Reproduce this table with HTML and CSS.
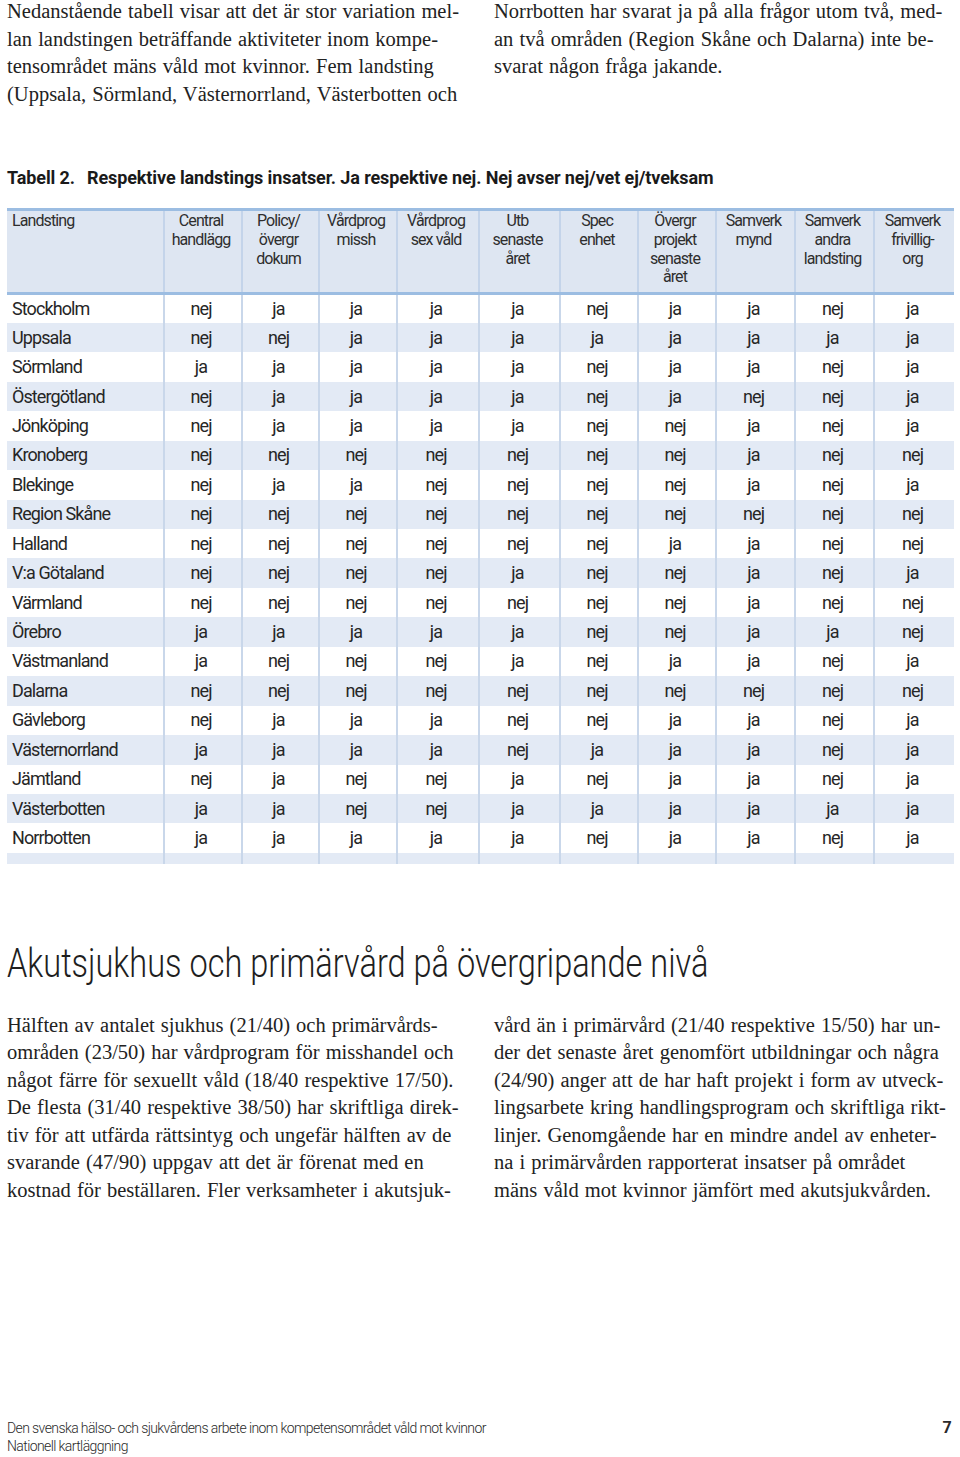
FILE: index.html
```html
<!DOCTYPE html>
<html lang="sv">
<head>
<meta charset="utf-8">
<title>Respektive landstings insatser</title>
<link rel="stylesheet" href="styles.css">
</head>
<body>
<div class="page">
  <section class="cols intro">
    <p class="text">Nedanstående tabell visar att det är stor variation mel-<br>lan landstingen beträffande aktiviteter inom kompe-<br>tensområdet mäns våld mot kvinnor. Fem landsting<br>(Uppsala, Sörmland, Västernorrland, Västerbotten och</p>
    <p class="text">Norrbotten har svarat ja på alla frågor utom två, med-<br>an två områden (Region Skåne och Dalarna) inte be-<br>svarat någon fråga jakande.</p>
  </section>

  <h2 class="caption"><span class="cap-num">Tabell 2.</span>Respektive landstings insatser. Ja respektive nej. Nej avser nej/vet ej/tveksam</h2>

  <table class="grid">
    <colgroup>
      <col class="c-name"><col class="c78"><col class="c77"><col class="c78"><col class="c82"><col class="c81"><col class="c78"><col class="c78"><col class="c79"><col class="c79"><col class="c80">
    </colgroup>
    <thead>
      <tr>
        <th class="name">Landsting</th>
        <th>Central<br>handlägg</th>
        <th>Policy/<br>övergr<br>dokum</th>
        <th>Vårdprog<br>missh</th>
        <th>Vårdprog<br>sex våld</th>
        <th>Utb<br>senaste<br>året</th>
        <th>Spec<br>enhet</th>
        <th>Övergr<br>projekt<br>senaste<br>året</th>
        <th>Samverk<br>mynd</th>
        <th>Samverk<br>andra<br>landsting</th>
        <th>Samverk<br>frivillig-<br>org</th>
      </tr>
    </thead>
    <tbody>
      <tr><td class="name">Stockholm</td><td>nej</td><td>ja</td><td>ja</td><td>ja</td><td>ja</td><td>nej</td><td>ja</td><td>ja</td><td>nej</td><td>ja</td></tr>
      <tr><td class="name">Uppsala</td><td>nej</td><td>nej</td><td>ja</td><td>ja</td><td>ja</td><td>ja</td><td>ja</td><td>ja</td><td>ja</td><td>ja</td></tr>
      <tr><td class="name">Sörmland</td><td>ja</td><td>ja</td><td>ja</td><td>ja</td><td>ja</td><td>nej</td><td>ja</td><td>ja</td><td>nej</td><td>ja</td></tr>
      <tr><td class="name">Östergötland</td><td>nej</td><td>ja</td><td>ja</td><td>ja</td><td>ja</td><td>nej</td><td>ja</td><td>nej</td><td>nej</td><td>ja</td></tr>
      <tr><td class="name">Jönköping</td><td>nej</td><td>ja</td><td>ja</td><td>ja</td><td>ja</td><td>nej</td><td>nej</td><td>ja</td><td>nej</td><td>ja</td></tr>
      <tr><td class="name">Kronoberg</td><td>nej</td><td>nej</td><td>nej</td><td>nej</td><td>nej</td><td>nej</td><td>nej</td><td>ja</td><td>nej</td><td>nej</td></tr>
      <tr><td class="name">Blekinge</td><td>nej</td><td>ja</td><td>ja</td><td>nej</td><td>nej</td><td>nej</td><td>nej</td><td>ja</td><td>nej</td><td>ja</td></tr>
      <tr><td class="name">Region Skåne</td><td>nej</td><td>nej</td><td>nej</td><td>nej</td><td>nej</td><td>nej</td><td>nej</td><td>nej</td><td>nej</td><td>nej</td></tr>
      <tr><td class="name">Halland</td><td>nej</td><td>nej</td><td>nej</td><td>nej</td><td>nej</td><td>nej</td><td>ja</td><td>ja</td><td>nej</td><td>nej</td></tr>
      <tr><td class="name">V:a Götaland</td><td>nej</td><td>nej</td><td>nej</td><td>nej</td><td>ja</td><td>nej</td><td>nej</td><td>ja</td><td>nej</td><td>ja</td></tr>
      <tr><td class="name">Värmland</td><td>nej</td><td>nej</td><td>nej</td><td>nej</td><td>nej</td><td>nej</td><td>nej</td><td>ja</td><td>nej</td><td>nej</td></tr>
      <tr><td class="name">Örebro</td><td>ja</td><td>ja</td><td>ja</td><td>ja</td><td>ja</td><td>nej</td><td>nej</td><td>ja</td><td>ja</td><td>nej</td></tr>
      <tr><td class="name">Västmanland</td><td>ja</td><td>nej</td><td>nej</td><td>nej</td><td>ja</td><td>nej</td><td>ja</td><td>ja</td><td>nej</td><td>ja</td></tr>
      <tr><td class="name">Dalarna</td><td>nej</td><td>nej</td><td>nej</td><td>nej</td><td>nej</td><td>nej</td><td>nej</td><td>nej</td><td>nej</td><td>nej</td></tr>
      <tr><td class="name">Gävleborg</td><td>nej</td><td>ja</td><td>ja</td><td>ja</td><td>nej</td><td>nej</td><td>ja</td><td>ja</td><td>nej</td><td>ja</td></tr>
      <tr><td class="name">Västernorrland</td><td>ja</td><td>ja</td><td>ja</td><td>ja</td><td>nej</td><td>ja</td><td>ja</td><td>ja</td><td>nej</td><td>ja</td></tr>
      <tr><td class="name">Jämtland</td><td>nej</td><td>ja</td><td>nej</td><td>nej</td><td>ja</td><td>nej</td><td>ja</td><td>ja</td><td>nej</td><td>ja</td></tr>
      <tr><td class="name">Västerbotten</td><td>ja</td><td>ja</td><td>nej</td><td>nej</td><td>ja</td><td>ja</td><td>ja</td><td>ja</td><td>ja</td><td>ja</td></tr>
      <tr><td class="name">Norrbotten</td><td>ja</td><td>ja</td><td>ja</td><td>ja</td><td>ja</td><td>nej</td><td>ja</td><td>ja</td><td>nej</td><td>ja</td></tr>
      <tr class="filler"><td></td><td></td><td></td><td></td><td></td><td></td><td></td><td></td><td></td><td></td><td></td></tr>
    </tbody>
  </table>

  <h1 class="heading"><span class="heading-text">Akutsjukhus och primärvård på övergripande nivå</span></h1>

  <section class="cols body">
    <p class="text">Hälften av antalet sjukhus (21/40) och primärvårds-<br>områden (23/50) har vårdprogram för misshandel och<br>något färre för sexuellt våld (18/40 respektive 17/50).<br>De flesta (31/40 respektive 38/50) har skriftliga direk-<br>tiv för att utfärda rättsintyg och ungefär hälften av de<br>svarande (47/90) uppgav att det är förenat med en<br>kostnad för beställaren. Fler verksamheter i akutsjuk-</p>
    <p class="text">vård än i primärvård (21/40 respektive 15/50) har un-<br>der det senaste året genomfört utbildningar och några<br>(24/90) anger att de har haft projekt i form av utveck-<br>lingsarbete kring handlingsprogram och skriftliga rikt-<br>linjer. Genomgående har en mindre andel av enheter-<br>na i primärvården rapporterat insatser på området<br>mäns våld mot kvinnor jämfört med akutsjukvården.</p>
  </section>

  <footer class="foot">
    <div class="foot-title">
      <div>Den svenska hälso- och sjukvårdens arbete inom kompetensområdet våld mot kvinnor</div>
      <div>Nationell kartläggning</div>
    </div>
    <div class="foot-num">7</div>
  </footer>
</div>
</body>
</html>
```

FILE: styles.css
```css
* { box-sizing: border-box; }
html, body { margin: 0; padding: 0; background: #fff; }
body { color: #1e1e1e; }

.page {
  width: 960px;
  height: 1457px;
  padding: 0 6px 0 7px;
  display: flex;
  flex-direction: column;
}

.cols {
  display: grid;
  grid-template-columns: 453px 459px;
  column-gap: 34px;
}

.text {
  margin: 0;
  font-family: "Liberation Serif", "DejaVu Serif", serif;
  font-size: 20.5px;
  line-height: 27.5px;
  word-spacing: 1px;
  color: #222;
  white-space: nowrap;
}

.intro { margin-top: -2px; }

.caption {
  margin: 60px 0 0 0;
  font-family: Roboto, "Liberation Sans", sans-serif;
  font-weight: bold;
  font-size: 18px;
  line-height: 20px;
  letter-spacing: -0.1px;
  color: #1a1a1a;
}
.cap-num { margin-right: 12px; }

.grid {
  margin-top: 20px;
  width: 947px;
  table-layout: fixed;
  border-collapse: collapse;
  font-family: Roboto, "Liberation Sans", sans-serif;
  color: #262626;
}
.c-name { width: 157px; }
.c77 { width: 77px; }
.c78 { width: 78px; }
.c79 { width: 79px; }
.c80 { width: 80px; }
.c81 { width: 81px; }
.c82 { width: 82px; }

.grid thead tr { background: #dee6f2; }
.grid th {
  height: 84px;
  padding: 1px 4px 0 0;
  vertical-align: top;
  text-align: center;
  font-weight: 400;
  font-size: 16px;
  line-height: 18.8px;
  letter-spacing: -0.9px;
  color: #2e2e2e;
  border-top: 3px solid #9cbde2;
  border-bottom: 3px solid #9cbde2;
  border-left: 2px solid #c4d4ea;
}
.grid th:first-child { border-left: none; }
.grid th.name { text-align: left; padding-left: 5px; }

.grid td {
  height: 29.45px;
  padding: 0 4px 0 0;
  text-align: center;
  vertical-align: middle;
  font-weight: 400;
  font-size: 18px;
  line-height: 20px;
  letter-spacing: -0.9px;
  border-left: 2px solid #c9d7ea;
}
.grid td:first-child { border-left: none; }
.grid td.name { text-align: left; padding-left: 5px; }
.grid tbody tr:nth-child(even) { background: #e3eaf5; }
.grid tr.filler td { height: 11px; }

.heading {
  margin: 78px 0 0 0;
  font-family: Roboto, "Liberation Sans", sans-serif;
  font-weight: 300;
  font-size: 40px;
  line-height: 44px;
  color: #1e1e1e;
  white-space: nowrap;
}
.heading-text {
  display: inline-block;
  transform: scaleX(0.813);
  transform-origin: left center;
}

.body { margin-top: 26px; }

.foot {
  margin-top: auto;
  margin-bottom: 2px;
  display: flex;
  justify-content: space-between;
  align-items: flex-start;
  font-family: Roboto, "Liberation Sans", sans-serif;
  font-weight: 300;
  font-size: 14px;
  line-height: 18px;
  letter-spacing: -0.6px;
  color: #2a2a2a;
}
.foot-num { font-weight: bold; font-size: 16px; padding-right: 3px; }
```
